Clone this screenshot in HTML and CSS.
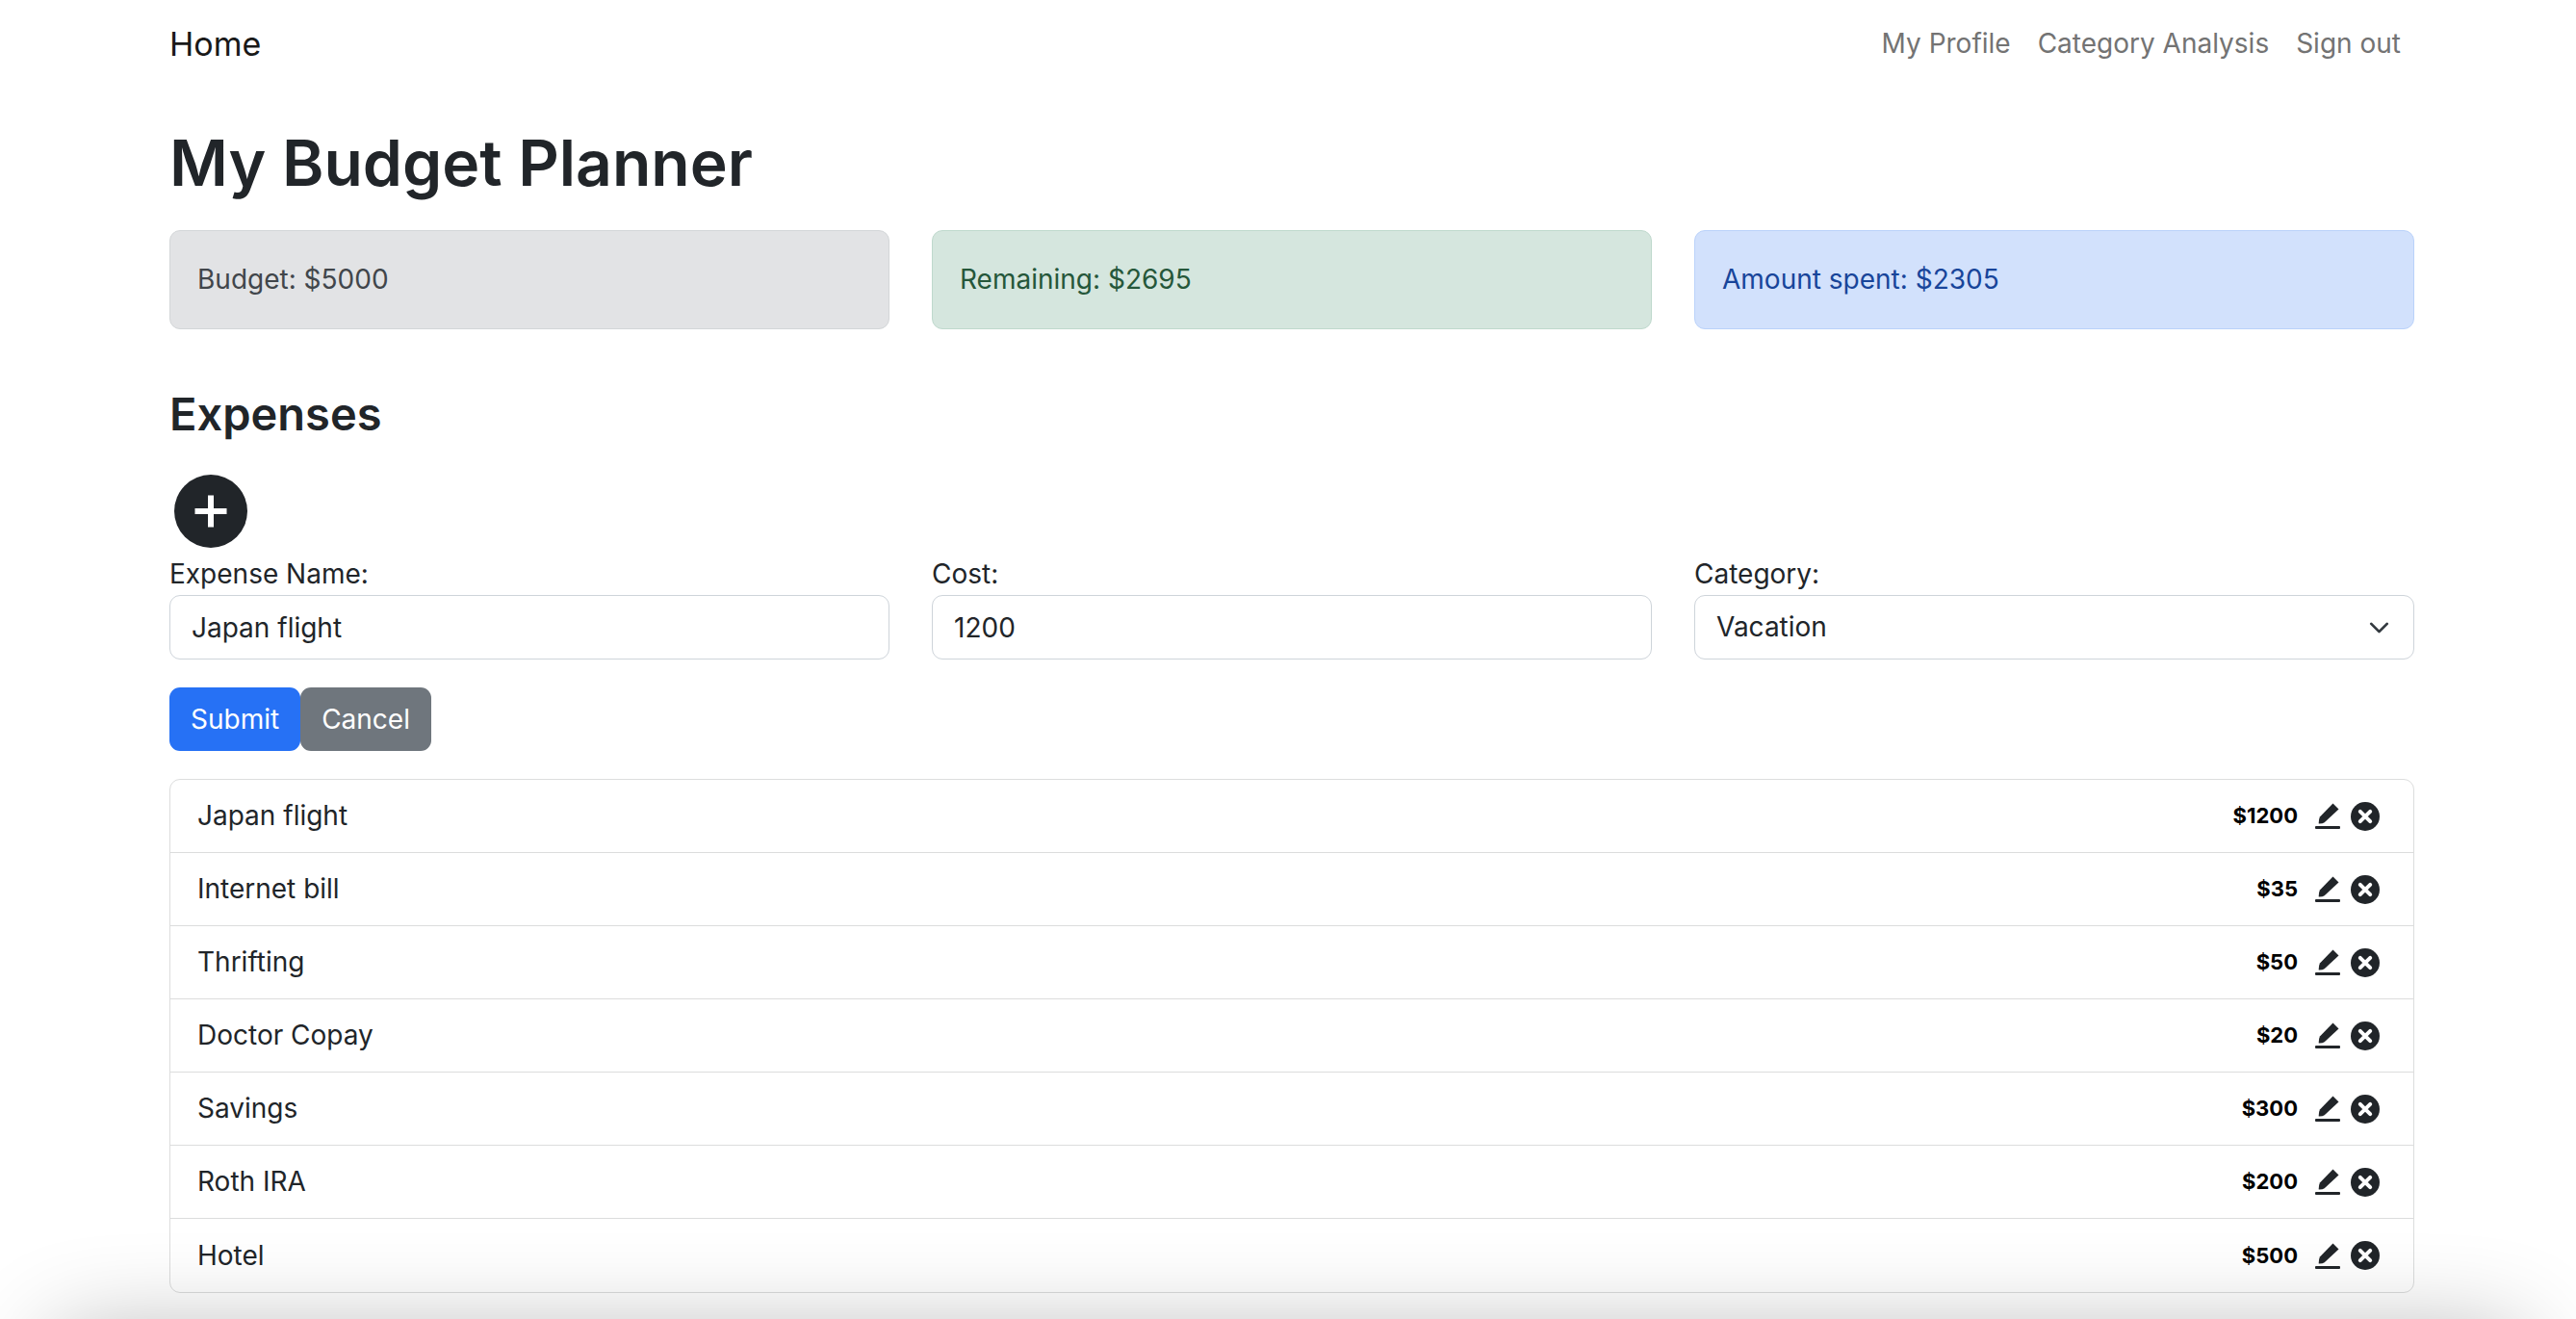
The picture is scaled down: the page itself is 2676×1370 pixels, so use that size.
FILE: index.html
```html
<!DOCTYPE html>
<html lang="en">
<head>
<meta charset="utf-8">
<title>My Budget Planner</title>
<link rel="stylesheet" href="styles.css">
</head>
<body>
<svg class="sprite" aria-hidden="true">
  <symbol id="edit" viewBox="0 0 26 27"><path d="M18.500 0.500 24.500 6.500 9.700 20.300Q8 21.600 4.300 21.600Q3.700 21.600 3.700 21Q3.700 17 4.900 14.600Z"/><rect x="0" y="24" width="26" height="3" rx="1"/></symbol>
  <symbol id="remove" viewBox="0 0 30 30"><circle cx="15" cy="15" r="15"/><path class="cross" d="M9.800 9.800 20.200 20.200M20.200 9.800 9.800 20.200"/></symbol>
</svg>
<nav class="navbar">
  <a class="brand" href="#">Home</a>
  <div class="links"><a href="#">My Profile</a><a href="#">Category Analysis</a><a href="#">Sign out</a></div>
</nav>
<main class="container">
  <h1>My Budget Planner</h1>
  <section class="columns">
    <div class="alert budget">Budget: $5000</div>
    <div class="alert remaining">Remaining: $2695</div>
    <div class="alert spent">Amount spent: $2305</div>
  </section>
  <h2>Expenses</h2>
  <button class="add" type="button" aria-label="Add expense"><svg viewBox="0 0 76 76"><circle cx="38" cy="38" r="38"/><path d="M38 21.500V54.500M21.500 38H54.500"/></svg></button>
  <form>
    <div class="columns">
      <div class="field"><label for="name">Expense Name:</label><input id="name" type="text" value="Japan flight"></div>
      <div class="field"><label for="cost">Cost:</label><input id="cost" type="text" value="1200"></div>
      <div class="field"><label for="category">Category:</label>
        <div class="select"><select id="category"><option>Vacation</option></select><svg viewBox="0 0 16 16" aria-hidden="true"><path d="m2 5 6 6 6-6"/></svg></div>
      </div>
    </div>
    <div class="actions"><button class="btn submit" type="submit">Submit</button><button class="btn cancel" type="button">Cancel</button></div>
  </form>
  <ul class="list">
    <li><span class="title">Japan flight</span><span class="price">$1200</span><button class="icon" type="button" aria-label="Edit"><svg class="edit"><use href="#edit"/></svg></button><button class="icon" type="button" aria-label="Delete"><svg class="remove"><use href="#remove"/></svg></button></li>
    <li><span class="title">Internet bill</span><span class="price">$35</span><button class="icon" type="button" aria-label="Edit"><svg class="edit"><use href="#edit"/></svg></button><button class="icon" type="button" aria-label="Delete"><svg class="remove"><use href="#remove"/></svg></button></li>
    <li><span class="title">Thrifting</span><span class="price">$50</span><button class="icon" type="button" aria-label="Edit"><svg class="edit"><use href="#edit"/></svg></button><button class="icon" type="button" aria-label="Delete"><svg class="remove"><use href="#remove"/></svg></button></li>
    <li><span class="title">Doctor Copay</span><span class="price">$20</span><button class="icon" type="button" aria-label="Edit"><svg class="edit"><use href="#edit"/></svg></button><button class="icon" type="button" aria-label="Delete"><svg class="remove"><use href="#remove"/></svg></button></li>
    <li><span class="title">Savings</span><span class="price">$300</span><button class="icon" type="button" aria-label="Edit"><svg class="edit"><use href="#edit"/></svg></button><button class="icon" type="button" aria-label="Delete"><svg class="remove"><use href="#remove"/></svg></button></li>
    <li><span class="title">Roth IRA</span><span class="price">$200</span><button class="icon" type="button" aria-label="Edit"><svg class="edit"><use href="#edit"/></svg></button><button class="icon" type="button" aria-label="Delete"><svg class="remove"><use href="#remove"/></svg></button></li>
    <li><span class="title">Hotel</span><span class="price">$500</span><button class="icon" type="button" aria-label="Edit"><svg class="edit"><use href="#edit"/></svg></button><button class="icon" type="button" aria-label="Delete"><svg class="remove"><use href="#remove"/></svg></button></li>
  </ul>
</main>
<div class="shade" aria-hidden="true"></div>
</body>
</html>
```
FILE: styles.css
```css
* { box-sizing: border-box; }
body { margin: 0; background: #fff; color: #212529; font: 400 28px/45px Inter, "Liberation Sans", sans-serif; overflow-x: hidden; }
button, input, select { font: inherit; color: inherit; }
h1, h2, ul { margin: 0; padding: 0; }
.sprite { position: absolute; width: 0; height: 0; }
.navbar, .container { padding: 0 168px 0 176px; }
.navbar { display: flex; align-items: center; justify-content: space-between; height: 90px; }
.navbar a { text-decoration: none; }
.brand { font-size: 34px; color: #191919; }
.links { display: flex; gap: 28px; padding-right: 14px; }
.links a { color: #737373; }
h1 { padding-top: 36px; font-size: 66px; font-weight: 600; line-height: 86px; margin-bottom: 27px; }
.columns { display: grid; grid-template-columns: repeat(3, minmax(0, 1fr)); gap: 44px; }
.alert { padding: 28px; border: 1px solid; border-radius: 11px; }
.budget { background: #e2e3e5; border-color: #d3d6d8; color: #41464b; }
.remaining { background: #d5e6de; border-color: #bfd9cd; color: #25573a; }
.spent { background: #d2e1fc; border-color: #bad2fa; color: #18459a; }
h2 { margin: 58px 0 33px; font-size: 47px; font-weight: 600; line-height: 60px; }
.add { display: block; width: 76px; height: 76px; margin: 0 5px 6px; padding: 0; border: 0; background: none; }
.add svg { display: block; fill: #212529; }
.add path { stroke: #fff; stroke-width: 6; fill: none; }
.field { display: flex; flex-direction: column; }
.field label { line-height: 43px; }
.field input, .field select { width: 100%; height: 67px; padding: 10px 22px; border: 1px solid #ced4da; border-radius: 11px; background: #fff; outline: 0; }
.select { display: grid; align-items: center; }
.select select, .select svg { grid-area: 1 / 1; }
.select select { appearance: none; }
.select svg { justify-self: end; width: 29px; height: 22px; margin-right: 22px; fill: none; stroke: #343a40; stroke-width: 2; stroke-linecap: round; stroke-linejoin: round; pointer-events: none; }
.actions { display: flex; margin: 29px 0; }
.btn { height: 66px; padding: 0 22px; border: 0; border-radius: 11px; color: #fff; }
.submit { background: #2671f5; }
.cancel { background: #6f767d; }
.list { list-style: none; border: 1px solid #dcdddd; border-radius: 11px; }
li { display: flex; align-items: center; height: 76px; padding: 0 35px 0 28px; border-bottom: 1px solid #dcdddd; }
li:last-child { border-bottom: 0; }
.title { flex: 1; }
.price { margin-right: 18px; font-size: 22px; font-weight: 700; color: #000; }
.icon { display: flex; padding: 0; border: 0; background: none; fill: #212529; }
.edit { width: 26px; height: 27px; margin-right: 11px; }
.remove { width: 30px; height: 30px; }
.cross { stroke: #fff; stroke-width: 4; stroke-linecap: round; }
.shade { position: fixed; left: 56px; right: 56px; top: 100%; height: 200px; border-radius: 20px; box-shadow: 0 16px 100px rgba(0, 0, 0, 0.3); pointer-events: none; }
```
